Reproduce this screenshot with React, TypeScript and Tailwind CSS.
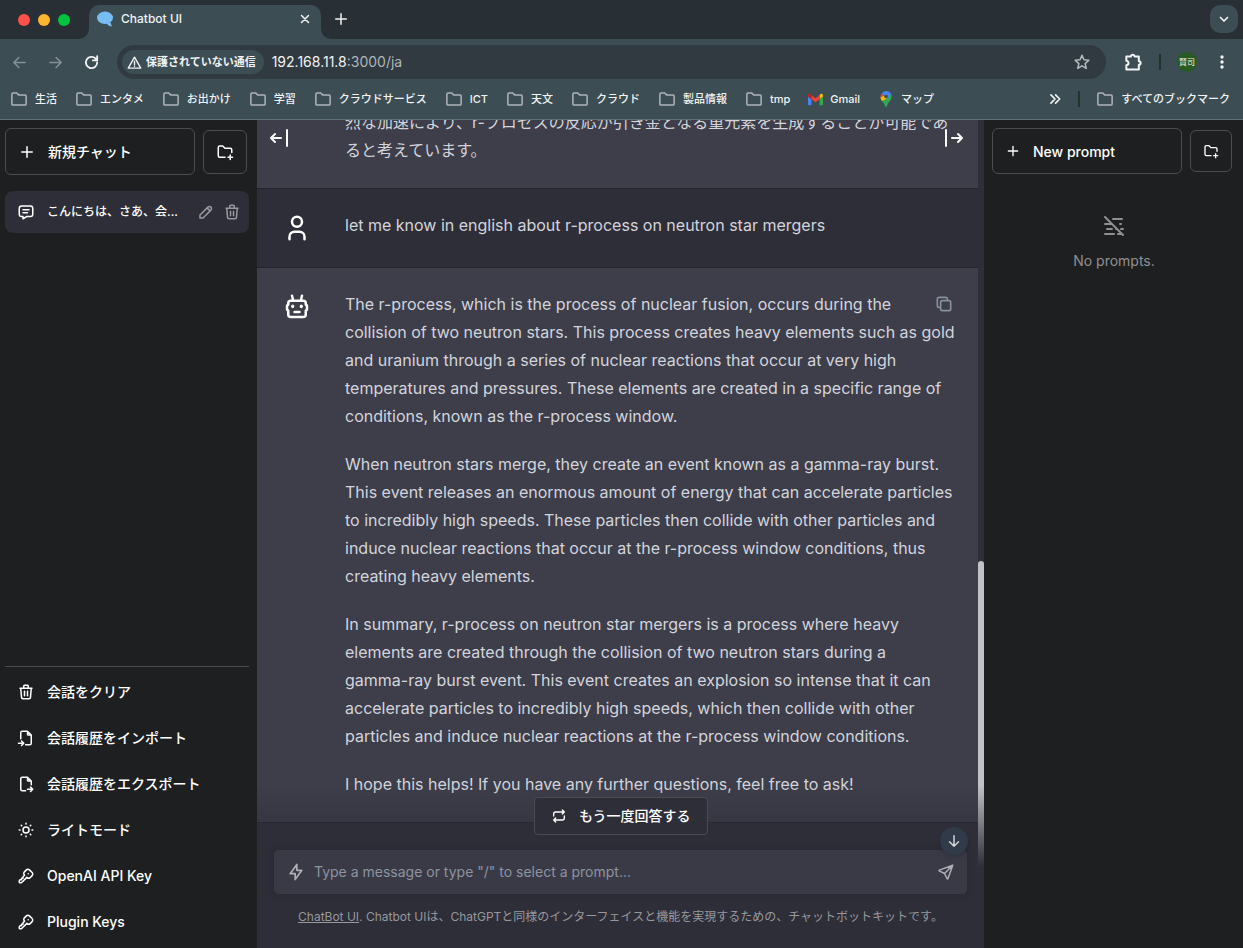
import React from 'react';

const paths = {
  plus: 'M12 5v14M5 12h14',
  folderPlus: 'M12 19h-7a2 2 0 0 1 -2 -2v-11a2 2 0 0 1 2 -2h4l3 3h7a2 2 0 0 1 2 2v3.5M16 19h6M19 16v6',
  message: 'M8 9h8M8 13h6M18 4a3 3 0 0 1 3 3v8a3 3 0 0 1 -3 3h-5l-5 3v-3h-2a3 3 0 0 1 -3 -3v-8a3 3 0 0 1 3 -3h12z',
  pencil: 'M4 20h4l10.5 -10.5a2.828 2.828 0 1 0 -4 -4l-10.5 10.5v4M13.5 6.5l4 4',
  trash: 'M4 7h16M10 11v6M14 11v6M5 7l1 12a2 2 0 0 0 2 2h8a2 2 0 0 0 2 -2l1 -12M9 7v-3a1 1 0 0 1 1 -1h4a1 1 0 0 1 1 1v3',
  fileImport: 'M14 3v4a1 1 0 0 0 1 1h4M5 13v-8a2 2 0 0 1 2 -2h7l5 5v11a2 2 0 0 1 -2 2h-5.5m-9.5 -2h7m-3 -3l3 3l-3 3',
  fileExport: 'M14 3v4a1 1 0 0 0 1 1h4M11.5 21h-4.5a2 2 0 0 1 -2 -2v-14a2 2 0 0 1 2 -2h7l5 5v5m-5 6h7m-3 -3l3 3l-3 3',
  sun: 'M8 12a4 4 0 1 0 8 0a4 4 0 1 0 -8 0M3 12h1m8 -9v1m8 8h1m-9 8v1m-6.4 -15.4l.7 .7m12.1 -.7l-.7 .7m0 11.4l.7 .7m-12.1 -.7l-.7 .7',
  key: 'M16.555 3.843l3.602 3.602a2.877 2.877 0 0 1 0 4.069l-2.643 2.643a2.877 2.877 0 0 1 -4.069 0l-.301 -.301l-6.558 6.558a2 2 0 0 1 -1.239 .578l-.175 .008h-1.172a1 1 0 0 1 -.993 -.883l-.007 -.117v-1.172a2 2 0 0 1 .467 -1.284l.119 -.13l.414 -.414h2v-2h2v-2l2.144 -2.144l-.301 -.301a2.877 2.877 0 0 1 0 -4.069l2.643 -2.643a2.877 2.877 0 0 1 4.069 0zM15 9h.01',
  user: 'M8 7a4 4 0 1 0 8 0a4 4 0 0 0 -8 0M6 21v-2a4 4 0 0 1 4 -4h4a4 4 0 0 1 4 4v2',
  robot: 'M7 7h10a2 2 0 0 1 2 2v1l1 1v3l-1 1v3a2 2 0 0 1 -2 2h-10a2 2 0 0 1 -2 -2v-3l-1 -1v-3l1 -1v-1a2 2 0 0 1 2 -2zM10 16h4M8.3 11.5a.3 .3 0 1 0 .5 0a.3 .3 0 1 0 -.5 0M15.200 11.5a.3 .3 0 1 0 .5 0a.3 .3 0 1 0 -.5 0M9 7l-1 -4M15 7l1 -4',
  copy: 'M8 10a2 2 0 0 1 2 -2h8a2 2 0 0 1 2 2v8a2 2 0 0 1 -2 2h-8a2 2 0 0 1 -2 -2zM16 8v-2a2 2 0 0 0 -2 -2h-8a2 2 0 0 0 -2 2v8a2 2 0 0 0 2 2h2',
  mistOff: 'M11 5h9M3 10h7M18 10h1M5 15h5M14 15h1M19 15h2M3 20h9M16 20h3M3 3l18 18',
  repeat: 'M4 12v-3a3 3 0 0 1 3 -3h13m-3 -3l3 3l-3 3M20 12v3a3 3 0 0 1 -3 3h-13m3 3l-3 -3l3 -3',
  bolt: 'M13 3l0 7l6 0l-8 11l0 -7l-6 0l8 -11',
  send: 'M10 14l11 -11M21 3l-6.5 18a.55 .55 0 0 1 -1 0l-3.5 -7l-7 -3.5a.55 .55 0 0 1 0 -1l18 -6.5',
  arrowDown: 'M12 5v14M18 13l-6 6M6 13l6 6',
  barLeft: 'M4 12h10M4 12l4 4M4 12l4 -4M20 4v16',
  barRight: 'M20 12h-10M20 12l-4 4M20 12l-4 -4M4 4v16',
  close: 'M6 6l12 12M18 6l-12 12',
  back: 'M21 12h-18M11 4l-8 8l8 8',
  forward: 'M3 12h18M13 4l8 8l-8 8',
  reload: 'M20 12a8 8 0 1 1 -2.4 -5.7L20 8.500M20 3v6h-6',
  warning: 'M12 3.500L22 21H2zM12 10v5M12 17.500v.5',
  folder: 'M2.500 5.500a1.500 1.500 0 0 1 1.500 -1.500h5l2.500 2.500h8.500a1.500 1.500 0 0 1 1.500 1.500v10.500a1.500 1.500 0 0 1 -1.500 1.500h-16a1.500 1.500 0 0 1 -1.500 -1.500z',
  star: 'M12 3l2.600 6.100l6.600 .6l-5 4.400l1.500 6.500l-5.700 -3.500l-5.700 3.500l1.500 -6.500l-5 -4.400l6.600 -.6z',
  puzzle: 'M4 5.500h5.500a2.200 2.200 0 0 1 4.400 0H19v5.500a2.200 2.200 0 0 1 0 4.400V21H4v-5.200a2.600 2.600 0 0 0 0 -5.200z',
  chevrons: 'M5 5l7 7l-7 7M13 5l7 7l-7 7',
  chevron: 'M5 9l7 7l7 -7',
};

type IconName = keyof typeof paths;

function Icon({ name, size = 18, stroke = 2, className = '' }: { name: IconName; size?: number; stroke?: number; className?: string }) {
  return (
    <svg
      width={size}
      height={size}
      viewBox="0 0 24 24"
      fill="none"
      stroke="currentColor"
      strokeWidth={stroke}
      strokeLinecap="round"
      strokeLinejoin="round"
      className={`shrink-0 ${className}`}
      aria-hidden="true"
    >
      <path d={paths[name]} />
    </svg>
  );
}

const GmailLogo = () => (
  <svg width="15" height="15" viewBox="0 0 24 24" className="shrink-0" aria-hidden="true">
    <path fill="#4285f4" d="M1.600 21H5.500V11.500L0 7.300V19.400A1.600 1.600 0 0 0 1.600 21z" />
    <path fill="#34a853" d="M18.500 21h3.900a1.600 1.600 0 0 0 1.600-1.600V7.300l-5.500 4.200z" />
    <path fill="#fbbc04" d="M18.500 5v6.500L24 7.300V5.100c0-2-2.300-3.200-3.900-2z" />
    <path fill="#ea4335" d="M5.500 11.500V5l6.500 4.900L18.500 5v6.500L12 16.400z" />
    <path fill="#c5221f" d="M0 5.100v2.200l5.500 4.200V5L3.900 3.100C2.300 1.900 0 3.100 0 5.100z" />
  </svg>
);

const MapLogo = () => (
  <svg width="16" height="16" viewBox="0 0 24 24" className="shrink-0" aria-hidden="true">
    <path fill="#34a853" d="M12 24c-.8 0-1-1-1.400-2-1-2.600-3-4.900-4.600-7L19.700 4.500c1.500 3 .9 6.700-1.200 9.500-2 2.700-3.900 4.800-5 8-.4 1-.7 2-1.500 2z" />
    <path fill="#fbbc04" d="M6 15c-1.200-1.600-2.200-3.600-2.200-6l5-3.200 6 4.800z" />
    <path fill="#ea4335" d="M3.800 9c-.1-2.200.7-4.200 2-5.700L10 7z" />
    <path fill="#4285f4" d="M5.800 3.300A8.300 8.300 0 0 1 19.700 4.500L13.500 12z" />
    <circle cx="12" cy="8.300" r="2.600" fill="#3c4d54" />
  </svg>
);

const bookmarks = ['生活', 'エンタメ', 'お出かけ', '学習', 'クラウドサービス', 'ICT', '天文', 'クラウド', '製品情報', 'tmp'];

function Bookmark({ icon, label }: { icon: React.ReactNode; label: string }) {
  return (
    <a href="#" className="flex shrink-0 items-center gap-[7px] whitespace-nowrap">
      {icon}
      {label}
    </a>
  );
}

const FolderIcon = () => <Icon name="folder" size={18} stroke={2} className="text-[#b0b4b8]" />;

function Browser() {
  return (
    <header className="shrink-0 bg-[#3c4d54] text-[#f1f3f4]">
      <div className="flex h-[39px] items-start bg-[#282f35]">
        <div className="flex h-[39px] w-[89px] items-center gap-2 pl-[18px]">
          <span className="size-3 rounded-full bg-[#ff5049]" />
          <span className="size-3 rounded-full bg-[#ffb42e]" />
          <span className="size-3 rounded-full bg-[#00c53c]" />
        </div>
        <div className="relative mt-[5px] flex h-[34px] w-[232px] items-center rounded-t-[10px] bg-[#3c4d54] px-2 pb-[6px]">
          <svg className="absolute bottom-0 -left-[10px] text-[#3c4d54]" width="10" height="10" aria-hidden="true">
            <path d="M10 0V10H0A10 10 0 0 0 10 0z" fill="currentColor" />
          </svg>
          <svg className="absolute -right-[10px] bottom-0 text-[#3c4d54]" width="10" height="10" aria-hidden="true">
            <path d="M0 0V10H10A10 10 0 0 1 0 0z" fill="currentColor" />
          </svg>
          <svg width="16" height="16" viewBox="0 0 16 16" className="shrink-0" aria-hidden="true">
            <ellipse cx="8" cy="6.800" rx="8" ry="6.200" fill="#77bdf3" />
            <path d="M9 12h5c0 1.500.5 2.500 1.300 3.500C13 15.500 11 14.500 9 12z" fill="#77bdf3" />
          </svg>
          <span className="ml-2 flex-1 text-[12px] font-medium">Chatbot UI</span>
          <button aria-label="Close tab" className="mr-[1px]"><Icon name="close" size={14} stroke={2.5} /></button>
        </div>
        <button aria-label="New tab" className="mt-[10px] ml-[11px]"><Icon name="plus" size={18} /></button>
        <button aria-label="Search tabs" className="mt-[5px] mr-[5px] ml-auto grid size-7 place-items-center rounded-[10px] bg-[#3c4d54]">
          <Icon name="chevron" size={12} stroke={3.5} />
        </button>
      </div>
      <div className="flex h-[46px] items-center">
        <button aria-label="Back" className="ml-3 text-[#839097]"><Icon name="back" size={15} stroke={2.6} /></button>
        <button aria-label="Forward" className="ml-[21px] text-[#839097]"><Icon name="forward" size={15} stroke={2.6} /></button>
        <button aria-label="Reload" className="ml-[20px]"><Icon name="reload" size={17} stroke={2.6} /></button>
        <div className="ml-[17px] flex h-[34px] flex-1 items-center rounded-full bg-[#303a40] pr-[15px] pl-[5px]">
          <button className="flex h-6 shrink-0 items-center gap-1 rounded-full bg-[#3c4d54] px-[5px] pr-2 text-[11px] font-bold whitespace-nowrap">
            <Icon name="warning" size={15} stroke={2.2} />
            保護されていない通信
          </button>
          <span className="ml-2 flex-1 text-[14px] leading-4 text-[#aeb6ba]"><span className="text-[#f1f3f4]">192.168.11.8</span>:3000/ja</span>
          <button aria-label="Bookmark" className="text-[#b5bbbe]"><Icon name="star" size={18} stroke={2} /></button>
        </div>
        <button aria-label="Extensions" className="ml-[17px]"><Icon name="puzzle" size={20} stroke={2.4} /></button>
        <span className="ml-4 h-4 w-0.5 bg-[#26302f]" />
        <button className="ml-[16px] grid size-5 place-items-center rounded-full bg-[#285b21] text-[8px] whitespace-nowrap">賢司</button>
        <button aria-label="Menu" className="mr-[13px] ml-[17px]">
          <svg width="16" height="16" viewBox="0 0 16 16" fill="currentColor" aria-hidden="true"><circle cx="8" cy="3" r="1.700" /><circle cx="8" cy="8" r="1.700" /><circle cx="8" cy="13" r="1.700" /></svg>
        </button>
      </div>
      <nav className="flex h-[35px] items-center gap-[18px] border-b border-[#5d6e75] pr-[13px] pb-[6px] pl-[10px] text-[11px] font-medium">
        {bookmarks.map((b) => <Bookmark key={b} icon={<FolderIcon />} label={b} />)}
        <Bookmark icon={<GmailLogo />} label="Gmail" />
        <Bookmark icon={<MapLogo />} label="マップ" />
        <div className="ml-auto flex items-center gap-4">
          <button aria-label="More bookmarks"><Icon name="chevrons" size={14} stroke={2.8} /></button>
          <span className="h-4 w-0.5 bg-[#26302f]" />
          <Bookmark icon={<FolderIcon />} label="すべてのブックマーク" />
        </div>
      </nav>
    </header>
  );
}

const menu: { icon: IconName; label: string }[] = [
  { icon: 'trash', label: '会話をクリア' },
  { icon: 'fileImport', label: '会話履歴をインポート' },
  { icon: 'fileExport', label: '会話履歴をエクスポート' },
  { icon: 'sun', label: 'ライトモード' },
  { icon: 'key', label: 'OpenAI API Key' },
  { icon: 'key', label: 'Plugin Keys' },
];

function Sidebar() {
  return (
    <aside className="flex w-[257px] shrink-0 flex-col bg-[#1e1f21] px-[5px] pt-2 pr-2 text-[14px] font-medium text-white">
      <div className="flex items-center gap-2">
        <button className="flex h-[47px] flex-1 items-center gap-3 rounded-md border border-[#4b4c4e] px-3">
          <Icon name="plus" />
          新規チャット
        </button>
        <button aria-label="New folder" className="mr-[2px] grid h-11 w-11 place-items-center rounded-md border border-[#4b4c4e]"><Icon name="folderPlus" /></button>
      </div>
      <div className="mt-4 flex h-[42px] items-center rounded-lg bg-[#2e2e38] pr-2 pl-3 text-[12px]">
        <Icon name="message" />
        <button className="ml-3 flex-1 truncate text-left">こんにちは、さあ、会...</button>
        <span className="flex gap-2 text-[#98989d]">
          <button aria-label="Rename" ><Icon name="pencil" /></button>
          <button aria-label="Delete"><Icon name="trash" /></button>
        </span>
      </div>
      <div className="mt-auto flex flex-col gap-1 border-t border-[#4b4c4e] pt-1 pb-[5px]">
        {menu.map((m) => (
          <button key={m.label} className="flex h-[42px] items-center gap-3 px-3 pb-px">
            <Icon name={m.icon} />
            {m.label}
          </button>
        ))}
      </div>
    </aside>
  );
}

const answer = [
  ['The r-process, which is the process of nuclear fusion, occurs during the', 'collision of two neutron stars. This process creates heavy elements such as gold', 'and uranium through a series of nuclear reactions that occur at very high', 'temperatures and pressures. These elements are created in a specific range of', 'conditions, known as the r-process window.'],
  ['When neutron stars merge, they create an event known as a gamma-ray burst.', 'This event releases an enormous amount of energy that can accelerate particles', 'to incredibly high speeds. These particles then collide with other particles and', 'induce nuclear reactions that occur at the r-process window conditions, thus', 'creating heavy elements.'],
  ['In summary, r-process on neutron star mergers is a process where heavy', 'elements are created through the collision of two neutron stars during a', 'gamma-ray burst event. This event creates an explosion so intense that it can', 'accelerate particles to incredibly high speeds, which then collide with other', 'particles and induce nuclear reactions at the r-process window conditions.'],
  ['I hope this helps! If you have any further questions, feel free to ask!'],
];

function Lines({ lines }: { lines: string[] }) {
  return (
    <p>
      {lines.map((l) => <span key={l} className="block whitespace-nowrap">{l}</span>)}
    </p>
  );
}

function Chat() {
  return (
    <main className="relative flex min-w-0 flex-1 flex-col overflow-hidden bg-[#2e2e38] text-[16px] leading-7 text-[#d3d4dc]">
      <button aria-label="Hide conversations" className="absolute top-[6px] left-[10px] z-10 text-white"><Icon name="barLeft" size={24} /></button>
      <button aria-label="Hide prompts" className="absolute top-[6px] right-[18px] z-10 text-white"><Icon name="barRight" size={24} /></button>

      <div className="mr-[6px] flex flex-col">
        <section className="flex h-[69px] shrink-0 items-end border-b border-[#24242d] bg-[#3d3e4a] pb-6 pl-[88px]">
          <Lines lines={['烈な加速により、r-プロセスの反応が引き金となる重元素を生成することが可能であ', 'ると考えています。']} />
        </section>
        <section className="flex h-[79px] shrink-0 items-start border-b border-[#24242d] pt-[22px] pl-[25px]">
          <Icon name="user" size={30} className="mt-0.5 text-white" />
          <p className="ml-[33px]">let me know in english about r-process on neutron star mergers</p>
        </section>
        <section className="flex h-[555px] shrink-0 items-start border-b border-[#24242d] bg-[#3d3e4a] pt-[22px] pl-[25px]">
          <Icon name="robot" size={30} className="mt-0.5 text-white" />
          <div className="ml-[33px] flex flex-col gap-5">
            {answer.map((p) => <Lines key={p[0]} lines={p} />)}
          </div>
          <button aria-label="Copy" className="absolute top-[174px] right-[30px] text-[#868f9c]"><Icon name="copy" size={20} /></button>
        </section>
      </div>

      <span className="absolute top-[441px] right-0 h-[320px] w-[6px] rounded-t-full bg-[#c1c2c6]" />
      <div className="absolute inset-x-0 bottom-0 bg-linear-to-b from-transparent via-[#2e2e38] to-[#2e2e38] pt-2 text-white">
        <div className="mx-4 flex flex-col pt-14">
          <form className="relative flex h-[46px] items-center rounded-md border border-[#292a33] bg-[#3a3a46] px-3 shadow-[0_0_10px_rgba(0,0,0,0.1)]">
            <button type="button" aria-label="Model" className="text-[#aeaeb5]"><Icon name="bolt" size={20} /></button>
            <input aria-label="Message" placeholder={'Type a message or type "/" to select a prompt...'} className="ml-2 min-w-0 flex-1 bg-transparent text-[14px] outline-none placeholder:text-[#8c93a1]" />
            <button type="button" aria-label="Send" className="text-[#aeaeb5]"><Icon name="send" /></button>
          </form>
        </div>
        <p className="px-3 pt-3 pb-[21px] text-center text-[12px] leading-5 text-[#97979c]">
          <a href="#" className="underline">ChatBot UI</a>. Chatbot UIは、ChatGPTと同様のインターフェイスと機能を実現するための、チャットボットキットです。
        </p>
      </div>
      <button className="absolute bottom-[113px] left-[277px] flex h-[38px] items-center gap-3 rounded border border-[#4b4b4f] bg-[#2e2e38] px-4 text-[14px] font-medium whitespace-nowrap text-white">
        <Icon name="repeat" size={16} />
        もう一度回答する
      </button>
      <button aria-label="Scroll down" className="absolute right-4 bottom-[93px] grid size-7 place-items-center rounded-full bg-[#303a48] text-[#d5d5d8] shadow-md"><Icon name="arrowDown" /></button>
    </main>
  );
}

function Prompts() {
  return (
    <aside className="w-[259px] shrink-0 bg-[#1e1f21] px-2 pt-2 pr-[11px] text-[14px] text-white">
      <div className="flex items-center gap-2">
        <button className="flex h-[46px] flex-1 items-center gap-3 rounded-md border border-[#4b4c4e] px-3 font-medium"><Icon name="plus" size={16} />New prompt</button>
        <button aria-label="New prompt folder" className="grid size-[42px] place-items-center rounded-md border border-[#4b4c4e]"><Icon name="folderPlus" size={16} /></button>
      </div>
      <div className="mt-10 flex flex-col items-center gap-3 pl-1 text-[#909092]">
        <Icon name="mistOff" size={24} />
        No prompts.
      </div>
    </aside>
  );
}

export default function App() {
  return (
    <div className="flex h-screen flex-col overflow-hidden font-[Inter,'Noto_Sans_CJK_JP',sans-serif]">
      <Browser />
      <div className="flex min-h-0 flex-1">
        <Sidebar />
        <Chat />
        <Prompts />
      </div>
    </div>
  );
}
